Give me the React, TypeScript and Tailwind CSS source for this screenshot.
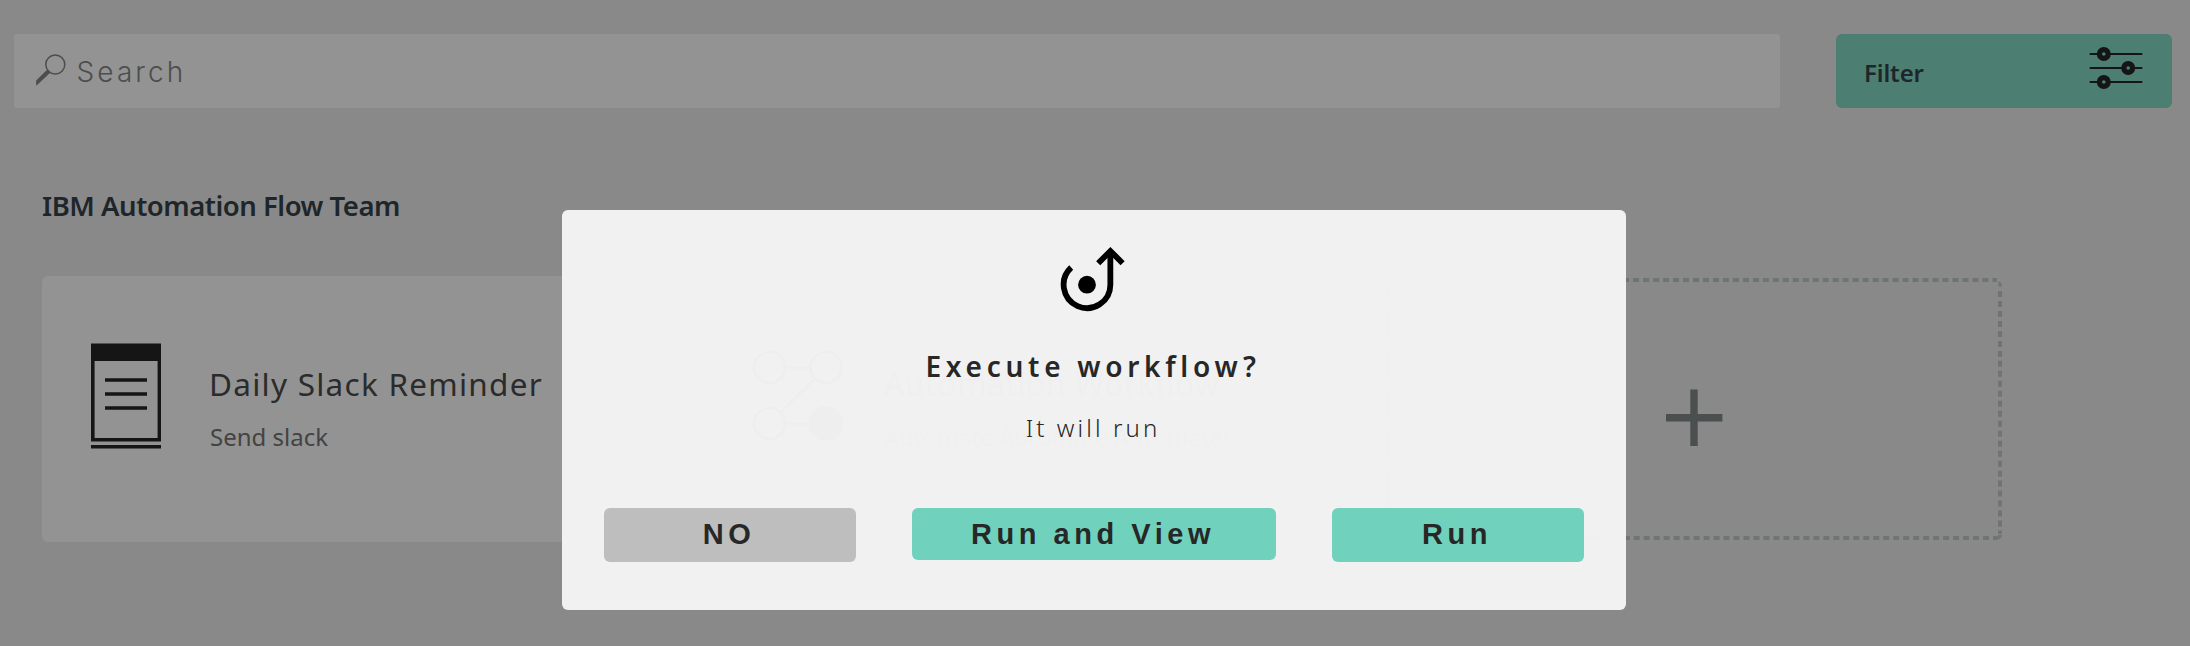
import type { ReactNode } from "react";

const plex = "font-['Noto_Sans',sans-serif]";
const helv = "font-['Liberation_Sans',Arial,sans-serif]";

function SearchIcon() {
  return (
    <svg className="block h-[34px] w-[34px] shrink-0" viewBox="0 0 34 34">
      <circle cx="20.3" cy="10.5" r="9.5" fill="none" stroke="#4d4d4d" strokeWidth="1.5" />
      <path d="M12.3 15.6 L15.4 18.4 L1.6 31.4 H1.2 V26.4 Z" fill="#4d4d4d" />
    </svg>
  );
}

function SlidersIcon() {
  return (
    <svg className="block h-[44px] w-[54px]" viewBox="0 0 54 44">
      <path d="M0.7 8H53.3M0.7 22H53.3M0.7 36H53.3" stroke="#151515" strokeWidth="2" />
      <g fill="#4c7e72" stroke="#151515" strokeWidth="5.2">
        <circle cx="14.8" cy="8" r="4.4" />
        <circle cx="39.2" cy="22" r="4.4" />
        <circle cx="14.8" cy="36" r="4.4" />
      </g>
    </svg>
  );
}

function NotepadIcon() {
  return (
    <svg className="block h-[106px] w-[70px] shrink-0" viewBox="0 0 70 106">
      <path d="M0 0.4H70V98.4H0ZM3.6 18V95H66.6V18Z" fill="#151515" fillRule="evenodd" />
      <path d="M14 37H56M14 51H56M14 65H56" stroke="#151515" strokeWidth="3.5" />
      <path d="M0 103.8H70" stroke="#151515" strokeWidth="3.5" />
    </svg>
  );
}

function FlowIcon() {
  return (
    <svg className="block h-[92px] w-[92px] shrink-0" viewBox="0 0 92 92">
      <g fill="none" stroke="#151515" strokeWidth="2.5">
        <circle cx="17.5" cy="18.5" r="15.5" />
        <circle cx="74" cy="18.5" r="15.5" />
        <circle cx="17.5" cy="74.5" r="15.5" />
        <circle cx="74" cy="74.5" r="16" fill="#151515" />
        <path d="M33 18.5H58.5M33 74.5H58.5M63 29.5L28.5 63.5" />
      </g>
    </svg>
  );
}

function WebhookIcon() {
  return (
    <svg className="block h-[66px] w-[66px]" viewBox="0 0 66 66">
      <path
        d="M11.2 21.5 A23.35 23.35 0 1 0 50.35 38.7 V5"
        fill="none"
        stroke="#000"
        strokeWidth="5.8"
      />
      <path d="M38.2 17.2 L50.4 5 L62.6 17.2" fill="none" stroke="#000" strokeWidth="5.8" />
      <circle cx="27" cy="38.7" r="8.9" fill="#000" />
    </svg>
  );
}

function Card({ icon, title, detail }: { icon: ReactNode; title: ReactNode; detail: ReactNode }) {
  return (
    <div className="flex h-[266px] w-[616px] items-start rounded-[6px] bg-[#939393]">
      {icon}
      <div className="pt-[88px]">
        {title}
        {detail}
      </div>
    </div>
  );
}

function AddCard() {
  return (
    <div className="flex h-[266px] w-[616px]">
      <svg className="block h-[266px] w-[616px]" viewBox="0 0 616 266">
        <g fill="none" stroke="#6f7573" strokeWidth="4" strokeDasharray="6 3.98">
          <path d="M7.6 4H611" />
          <path d="M614 15V258" />
          <path d="M8.2 262H612" />
          <path d="M2 15V258" />
        </g>
        <path d="M612.6 5.2Q615.8 6 616 10.4H612.4V6Z" fill="#6f7573" />
        <path d="M612.4 263.6Q615.8 262.4 616 259H612Z" fill="#6f7573" />
        <path d="M280 141.7H336.4M308 113.4V170" stroke="#4b4f4f" strokeWidth="7.4" />
      </svg>
    </div>
  );
}

function ModalButton({ className, children }: { className: string; children: ReactNode }) {
  return (
    <button
      className={`${helv} block rounded-[6px] pr-[2px] text-center text-[29px] leading-[53px] font-bold tracking-[4.55px] text-[#272727] ${className}`}
    >
      {children}
    </button>
  );
}

export default function App() {
  return (
    <div className={`relative h-[646px] w-[2190px] overflow-hidden bg-[#898989] pt-[34px] ${plex}`}>
      <div className="flex gap-[56px] pl-[14px]">
        <div className="flex h-[74px] w-[1766px] items-center rounded-[3px] bg-[#939393] pl-[21px]">
          <SearchIcon />
          <span className="pt-[2px] pl-[7.5px] font-['Inter',sans-serif] text-[28px] leading-[40px] font-light tracking-[3.1px] text-[#4d4d4d]">
            Search
          </span>
        </div>
        <div className="flex h-[74px] w-[336px] items-start justify-between rounded-[6px] bg-[#4c7e72] pr-[29px] pl-[28px]">
          <span className="pt-[21px] text-[24px] leading-[36px] font-[650] tracking-[-0.15px] text-[#1e262b]">
            Filter
          </span>
          <div className="pt-[12px]">
            <SlidersIcon />
          </div>
        </div>
      </div>

      <h2 className="mt-[78px] pl-[42px] text-[27.5px] leading-[40px] font-[640] tracking-[-0.48px] text-[#1e262b]">
        IBM Automation Flow Team
      </h2>

      <div className="mt-[50px] flex gap-[56px] pl-[42px]">
        <Card
          icon={
            <div className="pt-[67px] pr-[48px] pl-[49px]">
              <NotepadIcon />
            </div>
          }
          title={
            <p className="text-[31.5px] leading-[40px] tracking-[1.25px] whitespace-nowrap text-[#2b2b2b]">
              Daily Slack Reminder
            </p>
          }
          detail={
            <p className="mt-[17px] pl-px text-[24px] leading-[32px] whitespace-nowrap text-[#434343]">
              Send slack
            </p>
          }
        />
        <Card
          icon={
            <div className="pt-[73px] pr-[40px] pl-[38px]">
              <FlowIcon />
            </div>
          }
          title={
            <p className="text-[32px] leading-[40px] tracking-[0.4px] whitespace-nowrap text-[#434343]">
              Automation Workflow
            </p>
          }
          detail={
            <p className="mt-[17px] text-[24px] leading-[32px] tracking-[-0.3px] whitespace-nowrap text-[#555555]">
              Automate Automate Automate!
            </p>
          }
        />
        <AddCard />
      </div>

      <div className="absolute top-[210px] left-[562px] flex h-[400px] w-[1064px] flex-col rounded-[6px] bg-[#f3f3f3]/[98.2%] pt-[36px]">
        <div className="pl-[498px]">
          <WebhookIcon />
        </div>
        <h3 className="mt-[34px] pr-[2px] text-center text-[28px] leading-[40px] font-semibold tracking-[4.72px] text-[#272727]">
          Execute workflow?
        </h3>
        <p className="mt-[26px] pr-[2px] text-center text-[24px] leading-[32px] font-light tracking-[3.1px] text-[#272727]">
          It will run
        </p>
        <div className="mt-[64px] flex items-start gap-[56px] pl-[42px]">
          <ModalButton className="h-[54px] w-[252px] bg-[#bebebe] pb-px">NO</ModalButton>
          <ModalButton className="h-[52px] w-[364px] bg-[#70d2bd]">Run and View</ModalButton>
          <ModalButton className="h-[54px] w-[252px] bg-[#70d2bd] pb-px">Run</ModalButton>
        </div>
      </div>
    </div>
  );
}
